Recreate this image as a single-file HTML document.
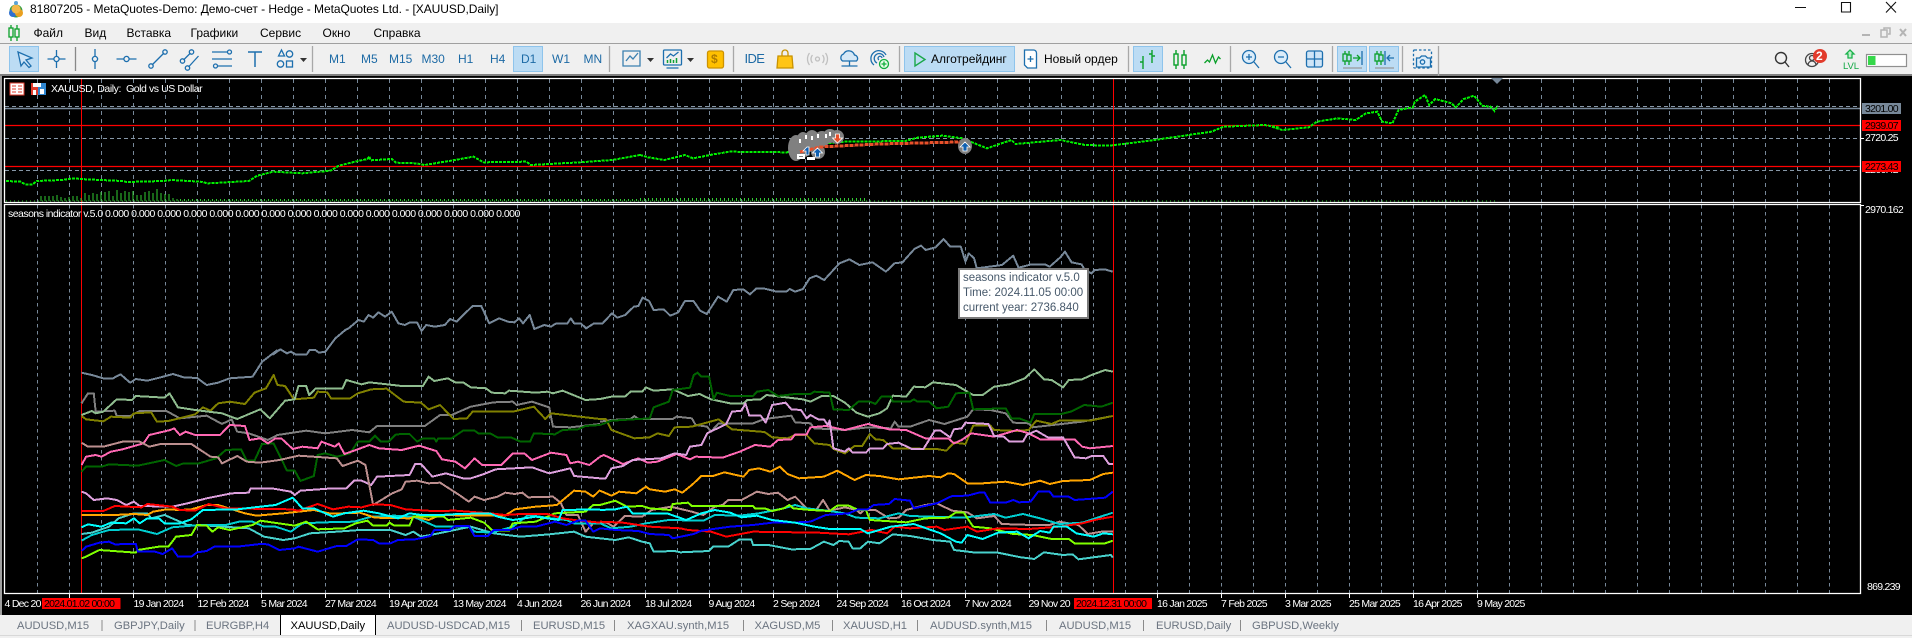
<!DOCTYPE html>
<html lang="ru"><head><meta charset="utf-8"><title>MetaTrader</title>
<style>
html,body{margin:0;padding:0;width:1912px;height:638px;overflow:hidden;background:#f0f0f0;font-family:"Liberation Sans","Noto Sans CJK SC",sans-serif}
.t{position:absolute;white-space:nowrap;line-height:14px;font-size:12px;color:#000}
.box{position:absolute}
.tb{color:#1d6aa5;font-size:12px;top:52px}
.c{color:#fff;font-size:10.5px;letter-spacing:-.72px;line-height:12px}
.tab{color:#6b7480;font-size:11.2px;top:619px}
svg{position:absolute;left:0;top:0}
.l polyline{fill:none;stroke-width:2;vector-effect:non-scaling-stroke;stroke-linejoin:round;shape-rendering:crispEdges}
.p polyline{fill:none;stroke-width:2;stroke-dasharray:3 1;vector-effect:non-scaling-stroke;shape-rendering:crispEdges}
</style></head><body>

<div class="box" style="left:0;top:0;width:1912px;height:23px;background:#fff"></div>
<div class="box" style="left:0;top:43px;width:1912px;height:1px;background:#a0a0a0"></div>
<div class="box" style="left:0;top:74px;width:1912px;height:3px;background:#808080"></div>
<div class="box" style="left:0;top:76px;width:1912px;height:539px;background:#000"></div>
<div class="box" style="left:0;top:76px;width:2px;height:539px;background:#a0a0a0"></div>

<!-- highlights -->
<div class="box" style="left:9px;top:46px;width:28px;height:24px;background:#bcdcf4;border:1px solid #8ec4ec"></div>
<div class="box" style="left:513px;top:46px;width:28px;height:24px;background:#bcdcf4;border:1px solid #8ec4ec"></div>
<div class="box" style="left:904px;top:46px;width:109px;height:24px;background:#bcdcf4;border:1px solid #8ec4ec"></div>
<div class="box" style="left:1133px;top:46px;width:28px;height:24px;background:#bcdcf4;border:1px solid #8ec4ec"></div>
<div class="box" style="left:1337px;top:46px;width:28px;height:24px;background:#bcdcf4;border:1px solid #8ec4ec"></div>
<div class="box" style="left:1369px;top:46px;width:28px;height:24px;background:#bcdcf4;border:1px solid #8ec4ec"></div>

<svg width="1912" height="638" viewBox="0 0 1912 638">
<defs>
<pattern id="g1" patternUnits="userSpaceOnUse" x="37" y="79" width="32" height="8"><path d="M.5 0v4" stroke="#778899" stroke-width="1"/></pattern>
<pattern id="g2" patternUnits="userSpaceOnUse" x="37" y="205" width="32" height="7"><path d="M.5 0v3.5" stroke="#778899" stroke-width="1"/></pattern>
</defs>
<rect x="37" y="79" width="1823" height="123" fill="url(#g1)"/>
<rect x="37" y="205" width="1823" height="388" fill="url(#g2)"/>
<path d="M5 106.5H1860M5 138.5H1860M5 170.5H1860" stroke="#8797a7" stroke-width="1" stroke-dasharray="4 3"/>
<path d="M5 108.5H1860" stroke="#778899" stroke-width="1.4"/>
<path d="M5 125.5H1860M5 166.5H1860" stroke="#f00" stroke-width="1.2"/>
<path d="M81.5 79V593M1113.5 79V593" stroke="#f00" stroke-width="1"/>
<path d="M4.5 78.5H1860.5V202.5H4.5ZM4.5 204.5H1860.5V593.5H4.5Z" fill="none" stroke="#fff" stroke-width="1.3"/>
<path d="M1491 78h12l-6 6z" fill="#778899"/>

<!-- volumes -->
<path d="M41 201V196M45 201V196M49 201V196M53 201V196M57 201V195M61 201V197M65 201V198M69 201V197M73 201V196M77 201V196M81 201V198M85 201V193M89 201V195M93 201V193M97 201V194M101 201V192M105 201V192M109 201V191M113 201V196M117 201V190M121 201V193M125 201V191M129 201V192M133 201V191M137 201V195M141 201V195M145 201V192M149 201V191M153 201V193M157 201V189M161 201V193M165 201V194M169 201V194M173 201V198M177 201V199" stroke="#32cd32" stroke-width="1" shape-rendering="crispEdges"/>
<path d="M6 201H1497" stroke="#32cd32" stroke-width="1" stroke-dasharray="1 3" shape-rendering="crispEdges"/>
<path d="M180 200H640" stroke="#32cd32" stroke-width="2" stroke-dasharray="1 3" shape-rendering="crispEdges"/>
<path d="M640 199.5H868" stroke="#32cd32" stroke-width="3" stroke-dasharray="1 3" shape-rendering="crispEdges"/>

<!-- price -->
<g class="p">
<g transform="translate(0,75) scale(.40816,.33333)"><polyline stroke="#00f000" points="15,318 50,320 62,328 80,328 90,318 150,315 180,310 210,313 300,318 310,321 400,318 420,315 490,320 510,325 610,318 630,302 670,290 740,295 810,287 830,272 870,260 900,252 905,244 908,256 960,252 970,263 1020,265 1040,270 1100,258 1160,245 1185,262 1290,260 1300,270 1420,262 1500,255 1568,240"/></g>
<g transform="translate(640,75) scale(.40816,.33333)"><polyline stroke="#00f000" points="0,240 20,247 60,255 110,240 130,250 180,238 220,230 360,232 420,210 500,200 650,198 680,188 740,182 790,190 820,205 850,220 910,195 920,207 1030,195 1090,210 1150,212 1260,195 1400,170 1430,155 1530,150 1568,158"/></g>
<g transform="translate(1272,75) scale(.40816,.33333)"><polyline stroke="#00f000" points="0,155 25,165 90,157 110,140 160,130 205,135 230,115 258,110 270,140 295,145 310,105 345,97 350,80 375,60 385,90 400,72 440,85 450,97 470,72 495,62 515,92 535,95 545,108 553,92"/></g>
</g>

<!-- trades -->
<g fill="#808080">
<ellipse cx="796" cy="148" rx="8" ry="13"/><ellipse cx="803" cy="145" rx="8" ry="13"/><ellipse cx="812" cy="141" rx="8" ry="11"/><ellipse cx="818" cy="152" rx="7" ry="7"/><ellipse cx="822" cy="139" rx="8" ry="8"/><ellipse cx="830" cy="136" rx="7" ry="7"/><ellipse cx="837" cy="137" rx="7" ry="7"/><ellipse cx="965" cy="146" rx="7" ry="8"/>
</g>
<path d="M800 139v4M806 135v4M812 136v4M818 134v4M826 134v4M830 132v4M798 155h6v3h-6zM808 158h6v1h-6z" stroke="#fff" stroke-width="2" fill="none"/>
<polyline points="800,152 820,147 880,144 960,142" fill="none" stroke="#e8502a" stroke-width="3" stroke-dasharray="4 1" shape-rendering="crispEdges"/>
<path d="M817.5 148l5 5h-3v4h-4v-4h-3zM965 142l5 5h-3v4h-4v-4h-3zM807 147l-4 4h3v4h3v-8z" fill="#1060b0" stroke="#fff" stroke-width=".8"/>
<path d="M837.5 143l5-5h-3v-4h-4v4h-3z" fill="#e8502a" stroke="#fff" stroke-width=".8"/>

<!-- lines -->
<g class="l">
<g transform="translate(80,225) scale(.66327,.33333)"><polyline stroke="#778899" points="290,390 302,373 312,385 318,380 325,388 342,388 346,375 355,375 360,383 370,380 385,340 400,315 405,310 420,285 428,290 435,270 442,278 450,262 460,275 470,260 480,295 490,300 498,292 508,292 515,318 522,300 535,305 550,300 558,282 568,290 582,262 592,243 605,243 617,295 632,280 645,290 655,292 662,280 668,295 678,270 685,312 700,300 710,305 718,295 735,295 740,280 745,295 755,295 763,310 775,295 788,295 802,265 810,278 822,270 835,245 842,243 848,218 858,228 865,255 880,253 890,272 902,262 912,228 925,228 935,257 945,267 962,215 975,230 985,195 1000,193 1010,208 1020,190 1030,190 1045,197 1050,200 1065,200 1070,192 1078,200 1090,192 1100,160 1110,152 1122,165 1145,115 1160,103 1175,120 1195,112 1215,140 1228,115 1240,112 1258,72 1268,62 1275,75 1290,67 1302,42 1312,65 1328,65 1335,110 1340,85 1348,100 1352,130 1390,120 1407,92 1415,128 1435,118 1455,118 1462,125 1478,97 1485,80 1495,112 1510,118 1515,135 1525,145 1530,135 1545,133 1557,140"/></g>
<g transform="translate(0,350) scale(.38270,.33333)">
<polyline stroke="#778899" points="213,68 240,75 270,85 295,85 315,73 340,98 355,87 385,92 420,82 452,72 480,82 515,84 540,105 570,98 600,85 660,80 685,35 725,0"/>
<polyline stroke="#808080" points="213,160 230,130 245,130 250,185 300,182 305,198 340,198 365,183 435,183 470,205 540,197 580,222 605,208 620,245 650,250 700,270 725,255 800,242 850,250 920,240 965,247 985,228 1110,228 1150,195 1180,195 1230,170 1290,157 1340,155 1350,165 1390,155 1435,172 1445,230 1490,232 1568,222"/>
<polyline stroke="#808000" points="213,198 225,208 270,214 290,200 340,203 350,190 395,187 410,215 440,213 510,193 530,172 550,182 570,160 600,155 640,162 665,128 695,115 715,75 725,105 745,108 768,148 820,143 830,125 855,127 865,145 915,145 935,130 970,118 1010,116 1055,155 1100,158 1120,178 1150,165 1185,207 1220,205 1235,185 1340,185 1395,170 1425,207 1440,190 1568,207"/>
<polyline stroke="#8fbc8f" points="213,195 240,183 250,190 270,185 305,148 345,150 355,138 430,143 443,130 465,172 510,180 580,190 620,207 680,178 705,205 745,152 770,148 780,108 800,108 808,135 825,115 895,115 905,90 945,103 965,97 1050,108 1105,108 1120,80 1135,93 1170,85 1190,97 1210,97 1230,112 1270,115 1285,128 1320,130 1330,122 1400,128 1430,125 1445,130 1470,122 1530,150 1568,147"/>
<polyline stroke="#006400" points="213,365 225,350 265,350 285,343 360,347 430,330 460,348 480,340 520,340 565,325 590,300 630,298 645,332 665,332 685,282 715,280 750,362 770,362 785,393 820,378 830,315 850,310 880,320 915,310 935,275 965,275 980,257 995,275 1015,275 1035,253 1070,252 1090,275 1105,265 1135,265 1140,275 1145,265 1180,265 1210,242 1240,242 1250,250 1280,250 1300,262 1335,262 1360,275 1385,275 1395,250 1450,253 1470,240 1510,238 1530,228 1568,225"/>
<polyline stroke="#ff69b4" points="213,345 225,320 250,315 265,320 290,305 320,298 375,280 390,255 445,240 455,235 470,255 485,245 510,255 575,255 600,225 640,228 652,270 680,265 700,280 720,265 735,265 765,297 790,290 830,295 840,275 875,290 885,280 900,312 930,300 965,285 990,295 1050,300 1095,287 1140,303 1155,328 1190,335 1215,355 1240,325 1260,345 1310,345 1340,310 1370,310 1390,330 1440,308 1480,315 1490,340 1510,335 1540,345 1568,320"/>
<polyline stroke="#dda0dd" points="213,425 225,430 245,450 280,445 305,450 330,465 350,455 365,468 450,470 490,460 540,445 605,430 650,428 655,415 710,415 760,425 770,435 785,422 870,415 905,415 925,392 945,392 970,405 985,380 1070,375 1085,342 1100,342 1130,380 1165,370 1210,385 1230,385 1265,372 1295,358 1390,352 1435,370 1490,355 1500,378 1568,385"/>
<polyline stroke="#bc8f8f" points="213,278 230,290 270,290 320,275 365,275 390,290 420,282 500,282 550,320 570,322 580,340 620,318 645,335 680,338 730,330 780,317 880,325 895,348 935,332 955,345 975,465 1025,430 1050,418 1060,395 1090,392 1120,400 1150,398 1200,435 1225,455 1240,440 1265,450 1300,440 1320,428 1345,432 1365,428 1380,442 1445,440 1465,458 1480,495 1510,495 1530,545 1550,520 1568,520"/>
<polyline stroke="#48d1cc" points="213,552 240,548 285,530 310,505 350,490 385,490 395,505 430,495 470,515 490,525 520,527 545,527 585,530 650,535 690,560 740,570 770,565 810,550 880,545 940,540 1020,540 1060,555 1080,545 1100,560 1125,555 1230,530 1290,550 1360,560 1435,553 1500,545 1530,560 1568,565"/>
<polyline stroke="#00ced1" points="213,572 240,555 285,540 360,538 410,552 450,532 520,525 590,525 625,515 660,515 690,530 720,530 760,545 790,520 850,517 925,515 970,500 1030,497 1080,500 1110,515 1140,530 1225,530 1240,545 1285,548 1340,530 1380,495 1440,505 1480,510 1500,520 1568,520"/>
<polyline stroke="#ffa500" points="213,495 300,495 350,492 385,495 400,485 435,478 470,480 500,478 540,465 570,465 640,490 670,497 740,490 820,480 860,490 890,490 940,488 980,503 1070,505 1085,500 1120,510 1150,495 1250,497 1320,497 1345,478 1400,470 1455,465 1500,422 1530,425 1550,440 1568,420"/>
<polyline stroke="#7fff00" points="213,625 225,620 260,600 355,608 360,600 415,590 440,590 460,560 500,555 515,525 540,527 555,545 570,532 600,540 660,525 680,512 770,527 800,515 830,538 900,535 930,520 960,512 975,527 1010,527 1018,518 1030,527 1070,527 1080,500 1160,500 1170,510 1230,503 1265,518 1285,540 1330,542 1340,520 1400,515 1450,490 1530,485 1550,465 1568,465"/>
<polyline stroke="#f00" points="213,483 270,483 300,468 370,472 385,462 450,470 470,480 510,482 545,462 590,475 760,478 780,482 830,462 870,478 910,470 945,472 975,463 1020,465 1060,478 1130,483 1190,482 1280,490 1320,495 1360,492 1430,492 1470,505 1500,510 1568,518"/>
<polyline stroke="#0000ff" points="213,603 225,590 260,578 285,575 300,583 355,582 360,605 405,605 425,612 450,595 465,620 500,620 515,607 540,603 560,590 600,590 620,590 680,582 700,583 730,600 770,595 780,590 830,605 880,588 905,588 935,568 975,570 990,580 1020,580 1040,570 1085,568 1125,558 1135,540 1175,540 1190,528 1225,528 1240,558 1275,558 1290,540 1330,540 1360,530 1400,530 1450,515 1480,525 1510,512 1530,512 1550,545 1568,535"/>
<polyline stroke="#00ffff" points="213,532 230,523 265,530 290,518 330,520 350,505 365,520 385,505 415,505 430,520 470,520 500,508 530,480 620,478 680,470 720,465 765,443 790,475 820,475 870,500 900,490 950,482 990,490 1040,505 1070,490 1100,495 1150,495 1200,492 1280,490 1300,500 1340,510 1400,500 1460,510 1470,480 1568,478"/>
</g>
<g transform="translate(600,350) scale(.38270,.33333)">
<polyline stroke="#808080" points="0,215 30,210 80,207 90,198 100,207 190,207 200,200 240,205 250,225 280,230 290,245 310,220 400,220 430,207 500,197 510,217 550,220 560,235 640,240 700,232 760,235 770,215 780,230 810,230 860,210 900,222 960,200 975,178 1020,180 1060,190 1080,218 1120,220 1130,232 1260,215 1340,198"/>
<polyline stroke="#808000" points="0,207 15,207 30,240 90,265 130,262 150,250 180,258 195,232 240,230 310,208 345,238 430,246 450,262 490,265 510,255 540,255 560,280 600,285 610,297 640,310 665,288 685,288 705,252 720,268 740,270 765,295 880,297 905,302 925,278 955,282 975,227 1020,227 1030,240 1090,243 1120,240 1140,212 1180,222 1200,212 1280,212 1340,198"/>
<polyline stroke="#8fbc8f" points="0,147 30,140 65,140 80,125 110,125 120,112 140,122 190,118 230,138 260,132 290,148 340,160 375,160 385,150 420,148 435,135 530,148 550,155 580,138 610,138 640,158 670,188 700,200 730,190 750,175 765,137 800,140 820,110 850,112 870,97 930,105 975,135 1000,135 1030,110 1070,103 1110,85 1135,58 1160,88 1180,90 1210,112 1225,90 1260,88 1280,77 1320,60 1340,65"/>
<polyline stroke="#006400" points="0,225 30,212 130,205 140,172 180,155 190,120 235,113 245,75 255,68 265,80 285,80 297,148 305,128 340,138 400,138 410,125 440,120 465,138 510,132 550,132 560,125 600,128 610,178 650,180 675,155 705,155 720,162 735,140 760,140 765,155 810,155 820,148 830,155 860,155 880,175 910,170 930,130 965,128 975,178 1060,175 1075,205 1095,205 1125,218 1135,192 1205,192 1230,185 1265,165 1310,170 1340,158"/>
<polyline stroke="#ff69b4" points="0,320 10,315 60,342 100,325 125,338 150,335 200,312 235,328 250,320 320,323 365,305 405,285 445,290 465,270 500,268 510,253 540,253 550,232 590,228 640,240 700,222 755,238 800,240 850,265 910,265 925,280 945,270 970,250 1030,260 1090,240 1120,250 1150,268 1240,268 1260,290 1280,295 1340,288"/>
<polyline stroke="#dda0dd" points="0,385 15,385 30,355 60,348 85,330 160,325 195,310 225,315 235,290 265,285 280,250 330,222 345,185 370,182 380,160 390,197 420,197 433,218 450,165 485,158 500,178 525,180 540,205 550,195 570,208 585,208 595,225 600,212 610,295 640,305 650,295 660,308 695,308 705,295 740,295 750,282 780,278 815,297 845,297 875,242 890,242 915,262 925,238 945,235 955,218 1015,222 1030,258 1055,260 1070,275 1105,275 1115,255 1140,242 1170,262 1210,262 1240,322 1270,325 1285,318 1315,318 1330,342 1340,342"/>
<polyline stroke="#bc8f8f" points="0,518 18,518 35,530 65,498 110,500 135,480 185,470 240,485 270,495 300,470 320,465 335,450 370,450 410,425 440,432 465,428 490,450 510,440 540,475 565,480 583,450 600,482 640,472 670,480 680,490 690,480 720,480 755,505 780,503 800,480 850,465 880,460 920,482 960,487 985,505 1030,498 1050,522 1130,525 1175,525 1200,515 1250,525 1275,552 1310,545 1340,545"/>
<polyline stroke="#48d1cc" points="0,565 40,570 75,562 110,575 130,580 140,605 195,603 210,607 285,603 295,590 335,590 365,568 395,568 400,585 440,585 500,598 550,597 585,575 610,585 625,573 650,575 660,595 680,595 700,575 730,580 765,553 810,558 870,570 915,575 925,600 975,607 1035,607 1100,622 1135,627 1160,607 1210,615 1235,613 1250,628 1335,615 1340,623"/>
<polyline stroke="#00ced1" points="0,520 30,535 80,530 120,520 180,510 270,512 300,495 365,497 415,490 480,475 510,465 540,475 600,483 640,490 670,503 730,505 780,490 810,498 950,503 1030,492 1060,503 1105,492 1150,505 1200,522 1260,518 1340,488"/>
<polyline stroke="#ffa500" points="0,422 30,437 50,425 95,430 120,410 130,418 170,425 195,418 215,428 240,405 265,378 295,378 325,367 375,380 390,360 415,355 445,365 470,350 490,372 520,385 585,380 620,362 665,390 695,375 730,378 780,388 860,378 890,382 910,370 925,372 960,400 1000,400 1060,395 1105,405 1150,392 1175,402 1210,393 1280,390 1315,372 1340,368"/>
<polyline stroke="#7fff00" points="0,465 40,452 70,470 110,468 130,475 185,480 190,462 230,458 240,468 400,468 405,475 430,475 450,483 480,475 495,465 505,475 550,480 600,483 620,467 650,467 675,480 695,480 705,510 800,517 850,505 910,503 930,487 950,487 975,530 1020,535 1080,552 1130,555 1180,567 1225,567 1240,580 1320,580 1340,572"/>
<polyline stroke="#f00" points="0,515 60,518 130,530 210,535 230,540 290,545 330,560 400,545 570,548 650,553 710,540 750,550 770,530 810,535 880,530 900,540 960,530 985,545 1040,535 1120,537 1200,530 1260,520 1300,508 1340,500"/>
<polyline stroke="#0000ff" points="0,535 40,540 100,543 130,552 180,555 190,565 245,552 265,542 340,530 400,525 450,518 500,518 550,515 590,495 650,490 675,478 700,478 715,465 755,462 770,447 810,452 820,475 880,460 920,438 960,437 990,428 1005,428 1020,458 1060,458 1080,450 1095,457 1125,455 1145,425 1175,425 1185,440 1225,440 1240,450 1320,443 1340,425"/>
<polyline stroke="#00ffff" points="0,480 40,478 70,470 85,490 125,490 175,490 225,510 265,490 300,480 340,488 370,502 410,497 450,510 510,518 560,530 600,537 680,537 700,550 760,530 820,522 890,550 930,575 945,578 960,555 1000,567 1040,548 1090,545 1120,565 1150,543 1175,548 1185,530 1220,530 1245,550 1290,560 1315,550 1340,553"/>
</g>
</g>

<!-- axis ticks -->
<path d="M69.5 594v4M133.5 594v4M197.5 594v4M261.5 594v4M325.5 594v4M389.5 594v4M453.5 594v4M517.5 594v4M581.5 594v4M645.5 594v4M709.5 594v4M773.5 594v4M837.5 594v4M901.5 594v4M965.5 594v4M1029.5 594v4M1157.5 594v4M1221.5 594v4M1285.5 594v4M1349.5 594v4M1413.5 594v4M1477.5 594v4" stroke="#fff"/>
<path d="M1861 138.5h3M1861 205.5h3" stroke="#fff"/>

<!-- toolbar icons -->
<g fill="none" stroke="#1d6fae" stroke-width="1.3">
<g transform="translate(14,33)" stroke="#0aa02a"><path d="M-3-8v16M3-8v16"/><rect x="-5" y="-5" width="4" height="9" fill="#f0f0f0"/><rect x="1" y="-4" width="4" height="8" fill="#f0f0f0"/></g>
<g transform="translate(25,59)" fill="#cfe5f7"><path d="M-7-7L7-1 1 1 6 7 4 8.5-1 3-4 7z"/></g>
<g transform="translate(56.5,59)"><path d="M-9 0h6M3 0h6M0-9v6M0 3v6"/><circle r="2.6"/></g>
<path d="M75.5 47v24" stroke="#888"/>
<g transform="translate(95,59)"><path d="M0-10v7M0 3v7"/><circle r="2.6"/></g>
<g transform="translate(126.5,59)"><path d="M-10 0h7M3 0h7"/><circle r="2.6"/></g>
<g transform="translate(158,59)"><path d="M-6 6L6-6"/><circle cx="-7" cy="7" r="2.2"/><circle cx="7" cy="-7" r="2.2"/></g>
<g transform="translate(190.5,59)"><path d="M-7 1L0-6M-2 8L8-3"/><circle cx="-8" cy="2" r="2.2"/><circle cx="1" cy="-7" r="2.2"/><circle cx="-3" cy="9" r="2.2"/></g>
<g transform="translate(222,59)"><path d="M-10-7H5M-10 0h20M-4 7h14"/><circle cx="7.5" cy="-7" r="2"/><circle cx="-6.5" cy="7" r="2"/></g>
<g transform="translate(255,59)" stroke-width="1.5"><path d="M-7-7H7M0-7V8"/></g>
<g transform="translate(284.5,59)"><path d="M-6-3l3-6 3 6z"/><circle cx="5" cy="-5" r="3.2"/><circle cx="-4" cy="5" r="3.2"/><rect x="2" y="2" width="6" height="6"/></g>
<path d="M300 58h7l-3.5 4z" fill="#333" stroke="none"/>
<path d="M312.5 46v26M609.5 46v26M733.5 46v26M899.5 46v26M1128.5 46v26M1230.5 46v26M1332.5 46v26M1402.5 46v26M1438.5 46v30" stroke="#a8a8a8"/>
<g transform="translate(631,59)" stroke="#3b80b0"><path d="M-8-8h17v15h-17zM-5 2l4-5 3 3 5-6"/></g>
<path d="M647 58h7l-3.5 4zM687 58h7l-3.5 4z" fill="#333" stroke="none"/>
<g transform="translate(672.5,59)" stroke="#1d6fae"><rect x="-9" y="-9" width="18" height="15" rx="1"/><path d="M-6 9h12M-6-1l4-4 3 2 5-4"/><path d="M-5 4v-3M-2 4v-4M1 4v-3M4 4v-5" stroke="#11a035" stroke-width="1.5"/></g>
<g transform="translate(715.5,59)"><rect x="-8" y="-8" width="16" height="17" rx="2" fill="#ffc000" stroke="#cd9200"/></g>
<g transform="translate(785,59)"><path d="M-7-3H7L8 9H-8z" fill="#ffc515" stroke="#c89200"/><path d="M-3-3v-3a3 3 0 0 1 6 0v3" stroke="#c89200"/></g>
<g transform="translate(817.5,59)" stroke="#c0c0c0"><circle r="2"/><path d="M-5-4a6 6 0 0 0 0 8M5-4a6 6 0 0 1 0 8M-8-6a10 10 0 0 0 0 12M8-6a10 10 0 0 1 0 12"/></g>
<g transform="translate(849.5,59)"><path d="M-7 2a4 4 0 0 1 1-7 6 6 0 0 1 11 1 3.5 3.5 0 0 1 2 6z" fill="#d5e8f6"/><path d="M0 2v5M-8 7H8"/></g>
<g transform="translate(880,59)"><path d="M-6 6a8 8 0 1 1 12-10M-3 4a5 5 0 1 1 7-6M-1 1a2 2 0 1 1 3-2"/><circle cx="4" cy="5" r="4.5" fill="#e8fbe8" stroke="#0fae3c"/><path d="M1.5 5h5M4 2.500v5" stroke="#0fae3c"/></g>
<path d="M915 53l10 6.500-10 6.500z" stroke="#1aa84a" fill="none" stroke-width="1.4"/>
<g transform="translate(1030.5,59)"><path d="M-6-9h9a3 3 0 0 1 3 3v15H-3l-3-3z" fill="#fff"/><path d="M0-3v6M-3 0h6"/></g>
<g transform="translate(1148,59)" stroke="#0aa02a" stroke-width="1.4"><path d="M-5-3V10M-8 3h3M4-9V4M4-3H7M1-5h3"/></g>
<g transform="translate(1180,59)" stroke="#0aa02a" stroke-width="1.4"><path d="M-4-9V10M4-9V10"/><rect x="-6" y="-5" width="4" height="11" fill="#f0f0f0"/><rect x="2" y="-4" width="4" height="10" fill="#f0f0f0"/></g>
<g transform="translate(1212.5,59)" stroke="#0aa02a"><path d="M-8 4l3-3 2 2 3-7 3 8 3-6 2 2"/></g>
<g transform="translate(1250,59)"><circle cx="-1" cy="-2" r="6.5" fill="#dcedfa"/><path d="M4 3l5 6M-4-2h6M-1-5v6"/></g>
<g transform="translate(1282,59)"><circle cx="-1" cy="-2" r="6.5" fill="#dcedfa"/><path d="M4 3l5 6M-4-2h6"/></g>
<g transform="translate(1314.5,59)"><rect x="-8" y="-8" width="16" height="16" rx="2" fill="#cfe5f7"/><path d="M0-8V8M-8 0H8"/></g>
<g transform="translate(1352,58)"><path d="M-7-7V7M-3-7V7" stroke="#0aa02a"/><rect x="-9" y="-4" width="4" height="7" stroke="#0aa02a" fill="#bcdcf4"/><rect x="-5" y="-3" width="4" height="6" stroke="#0aa02a" fill="#bcdcf4"/><path d="M1 0h7M5-3l3 3-3 3" stroke="#0aa02a"/><path d="M10-7V7"/><path d="M-9 10H10" stroke="#999"/></g>
<g transform="translate(1384,58)"><path d="M-7-7V7M-3-7V7" stroke="#0aa02a"/><rect x="-9" y="-4" width="4" height="7" stroke="#0aa02a" fill="#bcdcf4"/><rect x="-5" y="-3" width="4" height="6" stroke="#0aa02a" fill="#bcdcf4"/><path d="M1-7V7"/><path d="M3 0h7M6-3l-3 3 3 3"/><path d="M-9 10H10" stroke="#999"/></g>
<g transform="translate(1422.5,59)"><rect x="-9" y="-9" width="18" height="18" rx="1" stroke-dasharray="2.5 2"/><path d="M-6 8V-1h3l2-2h4l2 2h3v9z" fill="#dcedfa"/><circle cy="3" r="2.2"/></g>
<g transform="translate(1782,59)" stroke="#333" stroke-width="1.4"><circle cx="-1" cy="-1" r="5.5"/><path d="M3 3l4 5"/></g>
<g transform="translate(1812,60)" stroke="#444"><circle r="6.5"/><circle cy="-2" r="2.5"/><path d="M-4 5a4 4 0 0 1 8 0"/></g>
<circle cx="1820" cy="56" r="7" fill="#e23b2c" stroke="none"/>
<g transform="translate(1850,55)" stroke="#1ab24b"><path d="M0-5l4 4h-2v4h-4v-4h-2z" fill="#bff0cb"/></g>
<path d="M1795 7.500h11M1841.500 2.500h9v9.500h-9zM1886 2l10 10.500M1896 2l-10 10.500" stroke="#111" stroke-width="1.1"/>
<path d="M1862 35h8" stroke="#b4b4b4" stroke-width="2"/>
<path d="M1881 30h6v7h-6zM1884 30v-2h6v6h-2" stroke="#b4b4b4" stroke-width="1.5"/>
<path d="M1900 29l6 7M1906 29l-6 7" stroke="#b4b4b4" stroke-width="2"/>
</g>

<!-- chart header icons -->
<g stroke-width="1">
<rect x="10" y="83" width="14" height="12" fill="#fff" stroke="#e23b2c"/>
<path d="M12 86h4M18 86h4M12 89h4M18 89h4M12 92h4M18 92h4" stroke="#e23b2c"/>
<path d="M31 83h7v12h-7z" fill="#e23b2c"/><path d="M38 83h8v12h-8z" fill="#2f86d0"/>
<path d="M33 83h8v4h-8z" fill="#fff"/><path d="M33 90h3v5h-3zM40 89h4v5h-4z" fill="#fff"/>
</g>
<!-- logo -->
<g transform="translate(16,10)">
<circle cy="1" r="6.5" fill="#2f9e44"/><circle cx="-3" cy="3" r="4" fill="#2f6fd0"/><circle cx="3" cy="3" r="4" fill="#e9a020"/><circle cx="0" cy="-1" r="4.5" fill="#f2b84b"/><circle cy="-7" r="2" fill="#5aa3d8"/>
</g>
<rect x="1866.5" y="54.5" width="40" height="12" fill="#fff" stroke="#909090" stroke-width="1.2"/>
<rect x="1868" y="56" width="7.500" height="9" fill="#35d84a"/>
<rect x="1862" y="103" width="39" height="11" fill="#778899"/>
<rect x="1862" y="120" width="39" height="11" fill="#f00"/>
<rect x="1862" y="161" width="39" height="11" fill="#f00"/>
<rect x="42" y="598" width="78.5" height="11" fill="#f00"/>
<rect x="1074" y="598" width="78" height="11" fill="#f00"/>
</svg>

<!-- title + menu -->
<div class="t" style="left:30px;top:2px;letter-spacing:-.05px">81807205 - MetaQuotes-Demo: Демо-счет - Hedge - MetaQuotes Ltd. - [XAUUSD,Daily]</div>
<div class="t" style="left:33.5px;top:26px">Файл</div>
<div class="t" style="left:84.5px;top:26px">Вид</div>
<div class="t" style="left:126.5px;top:26px">Вставка</div>
<div class="t" style="left:190.5px;top:26px">Графики</div>
<div class="t" style="left:260px;top:26px">Сервис</div>
<div class="t" style="left:322.5px;top:26px">Окно</div>
<div class="t" style="left:373.5px;top:26px">Справка</div>

<!-- toolbar text -->
<div class="t tb" style="left:329px">M1</div>
<div class="t tb" style="left:361px">M5</div>
<div class="t tb" style="left:389px">M15</div>
<div class="t tb" style="left:421.5px">M30</div>
<div class="t tb" style="left:458px">H1</div>
<div class="t tb" style="left:490px">H4</div>
<div class="t tb" style="left:521px">D1</div>
<div class="t tb" style="left:552px">W1</div>
<div class="t tb" style="left:583.5px">MN</div>
<div class="t tb" style="left:744.5px;font-size:13px;letter-spacing:-.6px">IDE</div>
<div class="t" style="left:711px;top:52px;color:#b07c00;font-weight:bold">$</div>
<div class="t" style="left:931px;top:52px">Алготрейдинг</div>
<div class="t" style="left:1044px;top:52px">Новый ордер</div>
<div class="t" style="left:1816px;top:49px;color:#fff;font-weight:bold;font-size:12px">2</div>
<div class="t" style="left:1843px;top:60px;color:#13a845;font-size:9.5px;letter-spacing:-.1px">LVL</div>

<!-- chart text -->
<div class="t c" style="left:51px;top:83px;letter-spacing:-.42px">XAUUSD, Daily:&nbsp; Gold vs US Dollar</div>
<div class="t c" style="left:8px;top:208px;letter-spacing:-.52px">seasons indicator v.5.0 0.000 0.000 0.000 0.000 0.000 0.000 0.000 0.000 0.000 0.000 0.000 0.000 0.000 0.000 0.000 0.000</div>
<div class="t c" style="left:1865px;top:103px;color:#000">3201.00</div>
<div class="t c" style="left:1865px;top:120px;color:#000">2939.07</div>
<div class="t c" style="left:1865px;top:132px">2720.25</div>
<div class="t c" style="left:1865px;top:161px;color:#000">2273.43</div>
<div class="box" style="left:1865px;top:172px;width:39px;height:3px;overflow:hidden"><div class="t c" style="left:0;top:-8px">2266.42</div></div>
<div class="t c" style="left:1865px;top:204px">2970.162</div>
<div class="t c" style="left:1867px;top:581px">869.239</div>

<div class="t c" style="left:4.5px;top:598px">4 Dec 20</div>
<div class="t c" style="left:44px;top:598px;color:#000">2024.01.02 00:00</div>
<div class="t c" style="left:133.5px;top:598px">19 Jan 2024</div>
<div class="t c" style="left:197.5px;top:598px">12 Feb 2024</div>
<div class="t c" style="left:261px;top:598px">5 Mar 2024</div>
<div class="t c" style="left:325px;top:598px">27 Mar 2024</div>
<div class="t c" style="left:389px;top:598px">19 Apr 2024</div>
<div class="t c" style="left:453px;top:598px">13 May 2024</div>
<div class="t c" style="left:517px;top:598px">4 Jun 2024</div>
<div class="t c" style="left:580.5px;top:598px">26 Jun 2024</div>
<div class="t c" style="left:645px;top:598px">18 Jul 2024</div>
<div class="t c" style="left:708.5px;top:598px">9 Aug 2024</div>
<div class="t c" style="left:773px;top:598px">2 Sep 2024</div>
<div class="t c" style="left:836.5px;top:598px">24 Sep 2024</div>
<div class="t c" style="left:901px;top:598px">16 Oct 2024</div>
<div class="t c" style="left:964.5px;top:598px">7 Nov 2024</div>
<div class="t c" style="left:1028.5px;top:598px">29 Nov 20</div>
<div class="t c" style="left:1076px;top:598px;color:#000">2024.12.31 00:00</div>
<div class="t c" style="left:1157px;top:598px">16 Jan 2025</div>
<div class="t c" style="left:1221px;top:598px">7 Feb 2025</div>
<div class="t c" style="left:1285px;top:598px">3 Mar 2025</div>
<div class="t c" style="left:1349px;top:598px">25 Mar 2025</div>
<div class="t c" style="left:1413px;top:598px">16 Apr 2025</div>
<div class="t c" style="left:1477px;top:598px">9 May 2025</div>

<!-- tooltip -->
<div class="box" style="left:958px;top:268px;width:127px;height:47px;background:#fff;border:2px solid #7a7a7a"></div>
<div class="t" style="left:963px;top:271px;color:#46586a;font-size:11.5px;line-height:15px">seasons indicator v.5.0<br>Time: 2024.11.05 00:00<br>current year: 2736.840</div>

<!-- tabs -->
<div class="box" style="left:2px;top:616px;width:1910px;height:19px;background:#f0f0f0"></div>
<div class="box" style="left:280px;top:615px;width:96px;height:20px;background:#fff;border-left:1px solid #000;border-right:1px solid #000;box-sizing:border-box"></div>
<div class="box" style="left:0;top:635px;width:1912px;height:1px;background:#d8d8d8"></div>
<div class="t tab" style="left:17px">AUDUSD,M15</div>
<div class="t tab" style="left:114px">GBPJPY,Daily</div>
<div class="t tab" style="left:206px">EURGBP,H4</div>
<div class="t tab" style="left:290.5px;color:#000">XAUUSD,Daily</div>
<div class="t tab" style="left:387px">AUDUSD-USDCAD,M15</div>
<div class="t tab" style="left:533px">EURUSD,M15</div>
<div class="t tab" style="left:627px;letter-spacing:.05px">XAGXAU.synth,M15</div>
<div class="t tab" style="left:754.5px">XAGUSD,M5</div>
<div class="t tab" style="left:843px">XAUUSD,H1</div>
<div class="t tab" style="left:930px">AUDUSD.synth,M15</div>
<div class="t tab" style="left:1059px">AUDUSD,M15</div>
<div class="t tab" style="left:1156px">EURUSD,Daily</div>
<div class="t tab" style="left:1252px">GBPUSD,Weekly</div>
<svg width="1912" height="638" style="pointer-events:none"><path d="M102 620v11M195 620v11M521.5 620v11M614.5 620v11M743.5 620v11M832.5 620v11M917.5 620v11M1046.5 620v11M1143.5 620v11M1240.5 620v11" stroke="#8a8a8a"/></svg>
</body></html>
